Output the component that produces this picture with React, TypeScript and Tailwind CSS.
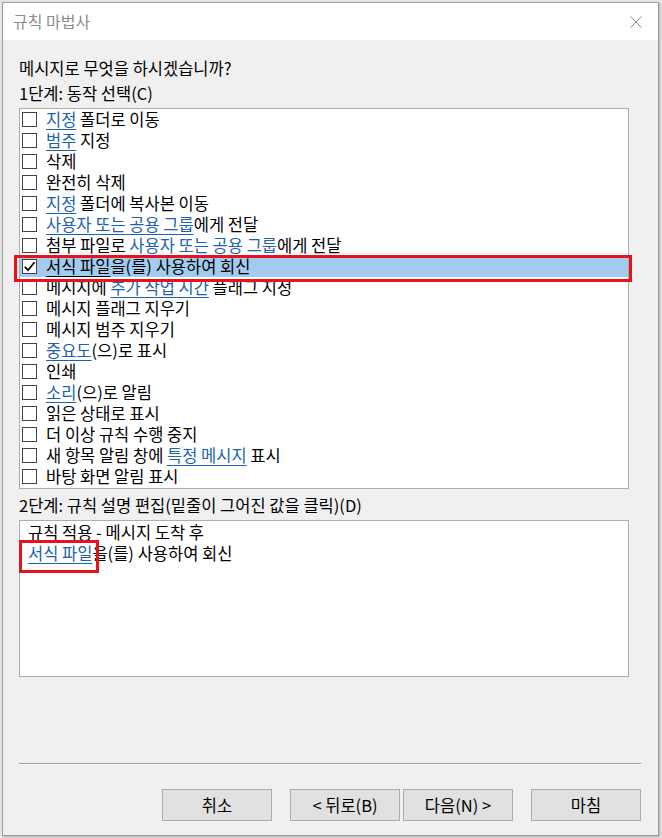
import React from "react";

const LINK = "text-[#1c62b0] underline decoration-[#1c62b0] underline-offset-[3px]";

type Part = { t: string; link?: boolean };

const items: Part[][] = [
  [{ t: "지정", link: true }, { t: " 폴더로 이동" }],
  [{ t: "범주", link: true }, { t: " 지정" }],
  [{ t: "삭제" }],
  [{ t: "완전히 삭제" }],
  [{ t: "지정", link: true }, { t: " 폴더에 복사본 이동" }],
  [{ t: "사용자 또는 공용 그룹", link: true }, { t: "에게 전달" }],
  [{ t: "첨부 파일로 " }, { t: "사용자 또는 공용 그룹", link: true }, { t: "에게 전달" }],
  [{ t: "서식 파일", link: true }, { t: "을(를) 사용하여 회신" }],
  [{ t: "메시지에 " }, { t: "추가 작업 시간", link: true }, { t: " 플래그 지정" }],
  [{ t: "메시지 플래그 지우기" }],
  [{ t: "메시지 범주 지우기" }],
  [{ t: "중요도", link: true }, { t: "(으)로 표시" }],
  [{ t: "인쇄" }],
  [{ t: "소리", link: true }, { t: "(으)로 알림" }],
  [{ t: "읽은 상태로 표시" }],
  [{ t: "더 이상 규칙 수행 중지" }],
  [{ t: "새 항목 알림 창에 " }, { t: "특정 메시지", link: true }, { t: " 표시" }],
  [{ t: "바탕 화면 알림 표시" }],
];

const CHECKED = 7;

function Checkbox({ checked }: { checked: boolean }) {
  return (
    <div className="w-[15px] h-[15px] border border-[#444444] bg-white flex items-center justify-center shrink-0">
      {checked && (
        <svg width="13" height="13" viewBox="0 0 13 13">
          <path d="M1.8 6.8 L5 10.2 L11.5 2.2" fill="none" stroke="#000" strokeWidth="1.8" />
        </svg>
      )}
    </div>
  );
}

function Btn({ label }: { label: string }) {
  return (
    <div className="w-[110px] h-[32px] bg-[#e1e1e1] border border-[#adadad] flex items-center justify-center text-black">
      {label}
    </div>
  );
}

export default function App() {
  return (
    <div
      className="w-[662px] h-[838px] bg-[#e6e6e6] pl-[2px] pt-[2px] overflow-hidden"
      style={{ fontFamily: '"Noto Sans CJK KR", "Noto Sans", sans-serif' }}
    >
      <div className="relative w-[657px] h-[834px] border border-[#9b9b9b] bg-[#f0f0f0] flex flex-col text-[16.5px] leading-[21px] text-black shadow-[1px_1px_2px_rgba(0,0,0,0.25)]">
        {/* Title bar */}
        <div className="h-[37px] bg-white flex items-center justify-between pl-[10px] pr-[16px] shrink-0">
          <span className="text-[16px] text-[#8c8c8c]">규칙 마법사</span>
          <svg width="12" height="12" viewBox="0 0 12 12">
            <path d="M0.5 0.5 L11.5 11.5 M11.5 0.5 L0.5 11.5" stroke="#8a8a8a" strokeWidth="1" fill="none" />
          </svg>
        </div>

        <div className="flex flex-col pl-[16px] pr-[17px] pt-[18px]">
          <div>메시지로 무엇을 하시겠습니까?</div>
          <div className="mt-[4px]">1단계: 동작 선택(C)</div>

          <div className="mt-[4px] w-[610px] h-[381px] border border-[#adadad] bg-white flex flex-col">
            {items.map((parts, i) => {
              const sel = i === CHECKED;
              return (
                <div
                  key={i}
                  className={`h-[21px] flex items-center pl-[2px] whitespace-pre ${sel ? "bg-[#a3cbee]" : ""}`}
                >
                  <Checkbox checked={sel} />
                  <span className="ml-[9px]">
                    {parts.map((p, j) =>
                      p.link ? (
                        <span
                          key={j}
                          className={
                            sel
                              ? "underline decoration-black underline-offset-[3px]"
                              : LINK
                          }
                        >
                          {p.t}
                        </span>
                      ) : (
                        <span key={j}>{p.t}</span>
                      )
                    )}
                  </span>
                </div>
              );
            })}
          </div>

          <div className="mt-[6px]">2단계: 규칙 설명 편집(밑줄이 그어진 값을 클릭)(D)</div>

          <div className="mt-[4px] w-[610px] h-[157px] border border-[#adadad] bg-white pl-[8px] pt-[1px] flex flex-col">
            <div>규칙 적용 - 메시지 도착 후</div>
            <div className="whitespace-pre">
              <span className={LINK}>서식 파일</span>
              <span>을(를) 사용하여 회신</span>
            </div>
          </div>

          <div className="mt-[86px] w-[622px] h-[2px] border-t border-[#a0a0a0] border-b border-b-white" />

          <div className="mt-[24px] flex justify-end">
            <Btn label="취소" />
            <div className="w-[18px]" />
            <Btn label="< 뒤로(B)" />
            <div className="w-[3px]" />
            <Btn label="다음(N) >" />
            <div className="w-[18px]" />
            <Btn label="마침" />
          </div>
        </div>

        {/* Red annotation boxes */}
        <div className="absolute left-[11px] top-[252px] w-[618px] h-[27px] border-[3px] border-[#e8121c] pointer-events-none" />
        <div className="absolute left-[16px] top-[537px] w-[80px] h-[33px] border-[3px] border-[#e8121c] pointer-events-none" />
      </div>
    </div>
  );
}
